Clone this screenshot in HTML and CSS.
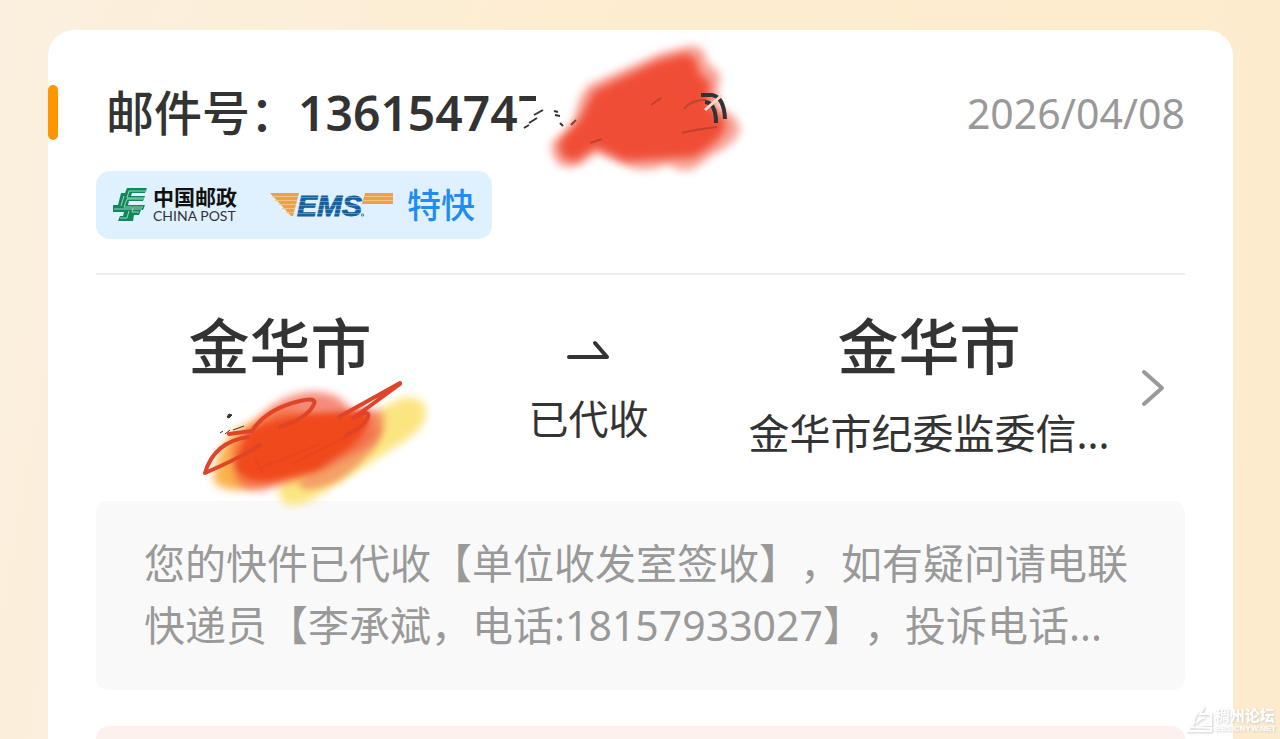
FILE: index.html
```html
<!DOCTYPE html>
<html lang="zh-CN">
<head>
<meta charset="utf-8">
<meta name="viewport" content="width=device-width, initial-scale=1">
<title>邮件详情</title>
<link rel="stylesheet" href="styles.css">
</head>
<body>
<main class="card">
  <header class="head">
    <span class="accent"></span>
    <h1 class="number">邮件号：<span class="digits">136154747</span>
      <svg class="smudge smudge-number" width="250" height="145" viewBox="0 0 250 145" aria-hidden="true">
        <defs>
          <filter id="soft" x="-20%" y="-20%" width="140%" height="140%"><feGaussianBlur stdDeviation="4"/></filter>
          <filter id="softer" x="-20%" y="-20%" width="140%" height="140%"><feGaussianBlur stdDeviation="3"/></filter>
        </defs>
        <path d="M21 66H36V52H60V106H12L21 84Z" fill="#fff"/>
        <path d="M29 88l8-5M24 93l5-3M34 80l9-5M54 76l4 1M55 80l5 1M60 88l3 3M71 90l5-5" stroke="#333" stroke-width="2" fill="none"/>
        <path d="M88 50L160 18L188 11Q206 9 207 28Q226 38 218 52L218 72Q238 80 240 94Q238 108 212 120L194 134Q178 138 168 129Q145 140 124 130L96 118L80 130Q52 140 51 108L72 90L80 62Z" fill="#f04a30" opacity=".5" filter="url(#soft)"/>
        <path d="M94 56L158 26L184 19Q198 20 198 36L210 48L208 70L224 84Q230 94 212 110L195 122L160 124L125 126L96 112L76 126Q56 124 60 106L80 84Z" fill="#f04a30" opacity=".95" filter="url(#soft)"/>
        <path d="M184 74Q190 65 206 65M182 98Q192 95 217 92M151 70l10-7M90 108l12-4" stroke="#a63c2c" stroke-width="2" fill="none" opacity=".65"/>
        <path d="M201 60H212Q224 62 225 84M205 67Q216 68 216 88" stroke="#333" stroke-width="4" fill="none"/>
        <path d="M205 75L222 60" stroke="#f8d8d2" stroke-width="3"/>
      </svg>
    </h1>
    <time class="date" datetime="2026-04-08">2026/04/08</time>
  </header>

  <div class="carrier">
    <svg class="post-mark" width="36" height="36" viewBox="0 0 36 36" aria-hidden="true">
      <path d="M15 1H35L33 6H20L19 9H33L31 14H17L16 18H33L31 23H29L27 28H22L21 34H6L8 29H11L12 25H1V18H6L9 6H13Z" fill="#13865a"/>
      <path d="M35 4H17L15 11H32M12 9L9 19M31 12H15L12 20H31M2 22H30M17 24L15 31H8M27 25H20L21 21" stroke="#9bd3bd" stroke-width="1" fill="none"/>
    </svg>
    <span class="post-name"><b class="post-cn">中国邮政</b><span class="post-en">CHINA POST</span></span>
    <svg class="ems" width="124" height="28" viewBox="0 0 124 28" role="img" aria-label="EMS">
      <path d="M0 2H29L23 25H21Z" fill="#eca047"/>
      <path d="M95 2H123V13H92Z" fill="#eca047"/>
      <text class="ems-text" x="27" y="25">EMS</text>
      <path d="M2 5.500H28M5 9.500H27M9 13.500H26M12 17.500H25M16 21.500H24M94 5.500H123M93 9.500H123" stroke="#f3c487" stroke-width="1"/>
      <path d="M28 6.500H92M27 10.500H92M26 14.500H92M25 18.500H92M24 22.500H92" stroke="#dff1ff" stroke-opacity=".35" stroke-width="1"/>
      <path d="M91.500 23h2v2h-2z" stroke="#4d87b8" stroke-width="1" fill="none"/>
    </svg>
    <span class="service">特快</span>
  </div>

  <section class="route">
    <div class="place">
      <h2 class="city">金华市</h2>
      <svg class="smudge smudge-sender" width="250" height="145" viewBox="0 0 250 145" aria-hidden="true">
        <path d="M215 27Q238 27 236 46Q232 62 205 77L134 122Q112 139 96 134Q84 126 92 113L170 65L193 37Z" fill="#fae16a" opacity=".85" filter="url(#soft)"/>
        <path d="M42 62L90 38L165 55L120 105L48 120Q20 119 24 104L28 86Z" fill="#f9a52d" opacity=".85" filter="url(#soft)"/>
        <path d="M192 55Q196 68 175 88Q150 116 123 119Q110 121 108 113L170 68Z" fill="#f4a168" filter="url(#softer)"/>
        <path d="M68 50Q88 25 120 22Q150 21 160 40L190 40Q200 54 178 76L124 104L74 120Q50 123 45 106L42 76Z" fill="#f15a42" opacity=".7" filter="url(#soft)"/>
        <path d="M58 62Q86 46 122 44L176 40Q188 54 160 78L128 100L80 111Q50 112 45 94Z" fill="#f0481f" filter="url(#softer)"/>
        <path d="M15 103Q24 72 58 67M15 103Q50 88 70 75M39 64L62 61Q76 39 110 31Q127 27 124 34Q118 48 90 57" stroke="#df4328" stroke-width="4" fill="none" stroke-linecap="round"/>
        <path d="M210 13L149 47M210 14L162 49Q180 38 178 47Q174 57 156 65" stroke="#df4328" stroke-width="4" fill="none" stroke-linecap="round"/>
        <path d="M65 88L74 105M76 94L94 90M68 99L130 74M102 94L158 66" stroke="#db3f20" stroke-width="2" fill="none" opacity=".3"/>
        <path d="M37 47l2-3 3 1-3 3zM30 63l3-2M35 64l5-4M43 60l11-4" stroke="#333" stroke-width="1" fill="#333"/>
      </svg>
    </div>
    <div class="status">
      <svg class="arrow" width="44" height="24" viewBox="0 0 44 24" aria-hidden="true"><path d="M3 20H41L29 6" fill="none" stroke="#333" stroke-width="4" stroke-linecap="round" stroke-linejoin="round"/></svg>
      <span>已代收</span>
    </div>
    <div class="place">
      <h2 class="city">金华市</h2>
      <p class="party">金华市纪委监委信...</p>
    </div>
    <button class="more" type="button" aria-label="查看详情"><svg width="26" height="40" viewBox="0 0 26 40" aria-hidden="true"><path d="M4 4L22 20L4 36" fill="none" stroke="#999" stroke-width="4" stroke-linecap="round" stroke-linejoin="round"/></svg></button>
  </section>

  <p class="note">您的快件已代收【单位收发室签收】，如有疑问请电联快递员【李承斌，电话:18157933027】，投诉电话...</p>
  <div class="notice"></div>
</main>

<div class="watermark">
  <svg width="30" height="30" viewBox="0 0 30 30" aria-hidden="true"><path d="M2 27L9 18Q8 9 19 2L15 9H26V20H15M11 18Q17 12 20 13M7 22L26 23V26H3" fill="none" stroke="#fff" stroke-width="2"/></svg>
  <span class="wm-text"><b class="wm-name">稠州论坛</b><b class="wm-site">BBS.CNYW.NET</b></span>
</div>
</body>
</html>
```
FILE: styles.css
```css
* { box-sizing: border-box; }
body {
  display: flex;
  flex-direction: column;
  margin: 0;
  min-height: 100vh;
  padding: 30px 47px 0 48px;
  background: linear-gradient(100deg, #fbf0df 0%, #fdedd0 45%, #fdebcd 100%);
  color: #333;
  font-family: "Noto Sans", "Noto Sans CJK SC", sans-serif;
  font-size: 41px;
  text-spacing-trim: space-all;
}
h1, h2, p { margin: 0; }
.card {
  flex: 1;
  display: flex;
  flex-direction: column;
  background: #fff;
  border-radius: 26px 26px 0 0;
  padding: 55px 48px 0;
}
.head {
  display: flex;
  align-items: center;
  height: 55px;
  margin-left: -48px;
}
.accent { width: 10px; height: 55px; border-radius: 5px; background: #ff9500; }
.number {
  position: relative;
  margin-left: 48px;
  font-size: 48px;
  line-height: 48px;
  font-weight: 500;
  white-space: nowrap;
}
.digits { font-weight: 600; }
.date { margin-left: auto; color: #999; line-height: 54px; }
.smudge { position: absolute; pointer-events: none; }
.smudge-number { left: 394px; top: -54px; }
.smudge-sender { left: 94px; top: 57px; }

.carrier {
  display: flex;
  align-items: center;
  width: fit-content;
  height: 68px;
  margin-top: 31px;
  padding: 0 17px 0 16px;
  border-radius: 14px;
  background: #dff1ff;
}
.post-name { display: flex; flex-direction: column; margin: 0 33px 0 5px; color: #111; }
.post-cn { font-size: 21px; line-height: 22px; }
.post-en { font-family: Lato, sans-serif; font-size: 14px; line-height: 16px; color: #333; }
.ems { overflow: visible; }
.ems-text { font: italic bold 30px "Liberation Sans", sans-serif; fill: #12609f; stroke: #12609f; stroke-width: 1px; }
.service { margin-left: 13px; color: #218df0; font-size: 34px; line-height: 40px; font-weight: 500; }

.route {
  display: grid;
  grid-template-columns: 34fr 26fr 34fr 72px;
  margin-top: 34px;
  padding-top: 38px;
  border-top: 2px solid #eee;
}
.place { position: relative; text-align: center; white-space: nowrap; }
.city { font-size: 61px; line-height: 68px; font-weight: 500; }
.party { margin-top: 22px; line-height: 60px; }
.status {
  display: flex;
  flex-direction: column;
  align-items: center;
  gap: 28px;
  padding: 24px 32px 0 0;
  font-size: 40px;
  line-height: 60px;
}
.more {
  align-self: center;
  justify-self: center;
  display: flex;
  margin-left: 8px;
  padding: 0;
  border: 0;
  background: none;
}
.note {
  margin-top: 38px;
  padding: 31px 48px 34px;
  border-radius: 12px;
  background: #f9f9f9;
  color: #999;
  line-height: 62px;
}
.notice { flex: 1; margin-top: 36px; border-radius: 14px 14px 0 0; background: #fdf1ee; }

.watermark {
  position: fixed;
  right: 4px;
  bottom: 4px;
  display: flex;
  align-items: center;
  color: #fff;
  filter: drop-shadow(1px 1px 1px #ccc);
}
.wm-text { display: flex; flex-direction: column; }
.wm-name { font-size: 15px; line-height: 17px; }
.wm-site { font-family: "Liberation Sans", sans-serif; font-size: 8px; line-height: 10px; }
```
